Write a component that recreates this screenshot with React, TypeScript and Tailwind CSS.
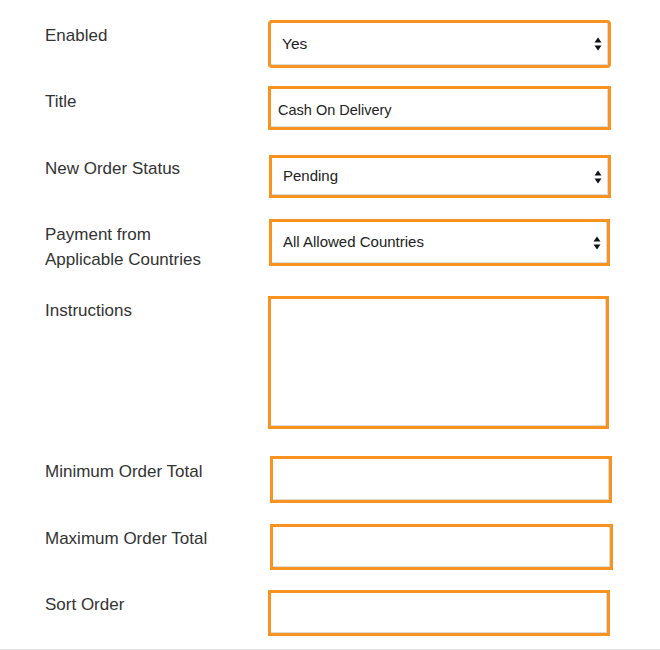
import React from 'react';

const boxBase =
  'block w-full h-full bg-white border-[3px] border-[#f7931e] shadow-[inset_-1px_-1px_0_#dcdcdc] outline-none text-[#222]';

function SelectArrows() {
  return (
    <svg
      className="pointer-events-none absolute right-[9px] top-1/2 -translate-y-1/2"
      width="8"
      height="14"
      viewBox="0 0 8 14"
    >
      <path d="M4 0.5 L7.5 5.5 L0.5 5.5 Z" fill="#111" />
      <path d="M4 13.5 L7.5 8.5 L0.5 8.5 Z" fill="#111" />
    </svg>
  );
}

interface RowProps {
  label: React.ReactNode;
  rowClass: string;
  boxClass: string;
  labelClass?: string;
  children: React.ReactNode;
}

function Row({ label, rowClass, boxClass, labelClass = 'pt-[3px]', children }: RowProps) {
  return (
    <div className={`flex items-start pl-[45px] ${rowClass}`}>
      <div className={`w-[223px] shrink-0 text-[17px] leading-[25px] text-[#333] ${labelClass}`}>{label}</div>
      <div className={`relative h-full ${boxClass}`}>{children}</div>
    </div>
  );
}

export default function App() {
  return (
    <div
      className="h-[650px] w-[660px] bg-white border-b border-[#e0e0e0] overflow-hidden"
      style={{ fontFamily: '"Liberation Sans", Arial, Helvetica, sans-serif' }}
    >
      <Row label="Enabled" rowClass="mt-[20px] h-[48px]" boxClass="w-[343px]">
        <select className={`${boxBase} appearance-none rounded-[4px] pl-[11px] text-[15.5px]`} defaultValue="yes">
          <option value="yes">Yes</option>
          <option value="no">No</option>
        </select>
        <SelectArrows />
      </Row>

      <Row label="Title" rowClass="mt-[18px] h-[44px]" boxClass="w-[343px]">
        <input
          className={`${boxBase} pl-[7px] pt-[4px] text-[14.5px]`}
          defaultValue="Cash On Delivery"
        />
      </Row>

      <Row label="New Order Status" rowClass="mt-[25px] h-[43px]" labelClass="pt-[1px]" boxClass="ml-[1px] w-[342px]">
        <select className={`${boxBase} appearance-none pl-[11px] text-[15px]`} defaultValue="pending">
          <option value="pending">Pending</option>
          <option value="processing">Processing</option>
        </select>
        <SelectArrows />
      </Row>

      <Row
        label={
          <>
            Payment from
            <br />
            Applicable Countries
          </>
        }
        rowClass="mt-[21px] h-[47px]"
        boxClass="ml-[1px] w-[341px]"
      >
        <select className={`${boxBase} appearance-none pl-[11px] text-[15px]`} defaultValue="all">
          <option value="all">All Allowed Countries</option>
          <option value="specific">Specific Countries</option>
        </select>
        <SelectArrows />
      </Row>

      <Row label="Instructions" rowClass="mt-[30px] h-[133px]" labelClass="pt-[2px]" boxClass="w-[341px]">
        <textarea className={`${boxBase} resize-none`} />
      </Row>

      <Row label="Minimum Order Total" rowClass="mt-[27px] h-[47px]" boxClass="ml-[2px] w-[342px]">
        <input className={`${boxBase} pl-[8px] text-[15px]`} />
      </Row>

      <Row label="Maximum Order Total" rowClass="mt-[21px] h-[46px]" labelClass="pt-[2px]" boxClass="ml-[2px] w-[343px]">
        <input className={`${boxBase} pl-[8px] text-[15px]`} />
      </Row>

      <Row label="Sort Order" rowClass="mt-[20px] h-[46px]" labelClass="pt-[2px]" boxClass="w-[342px]">
        <input className={`${boxBase} pl-[8px] text-[15px]`} />
      </Row>
    </div>
  );
}
